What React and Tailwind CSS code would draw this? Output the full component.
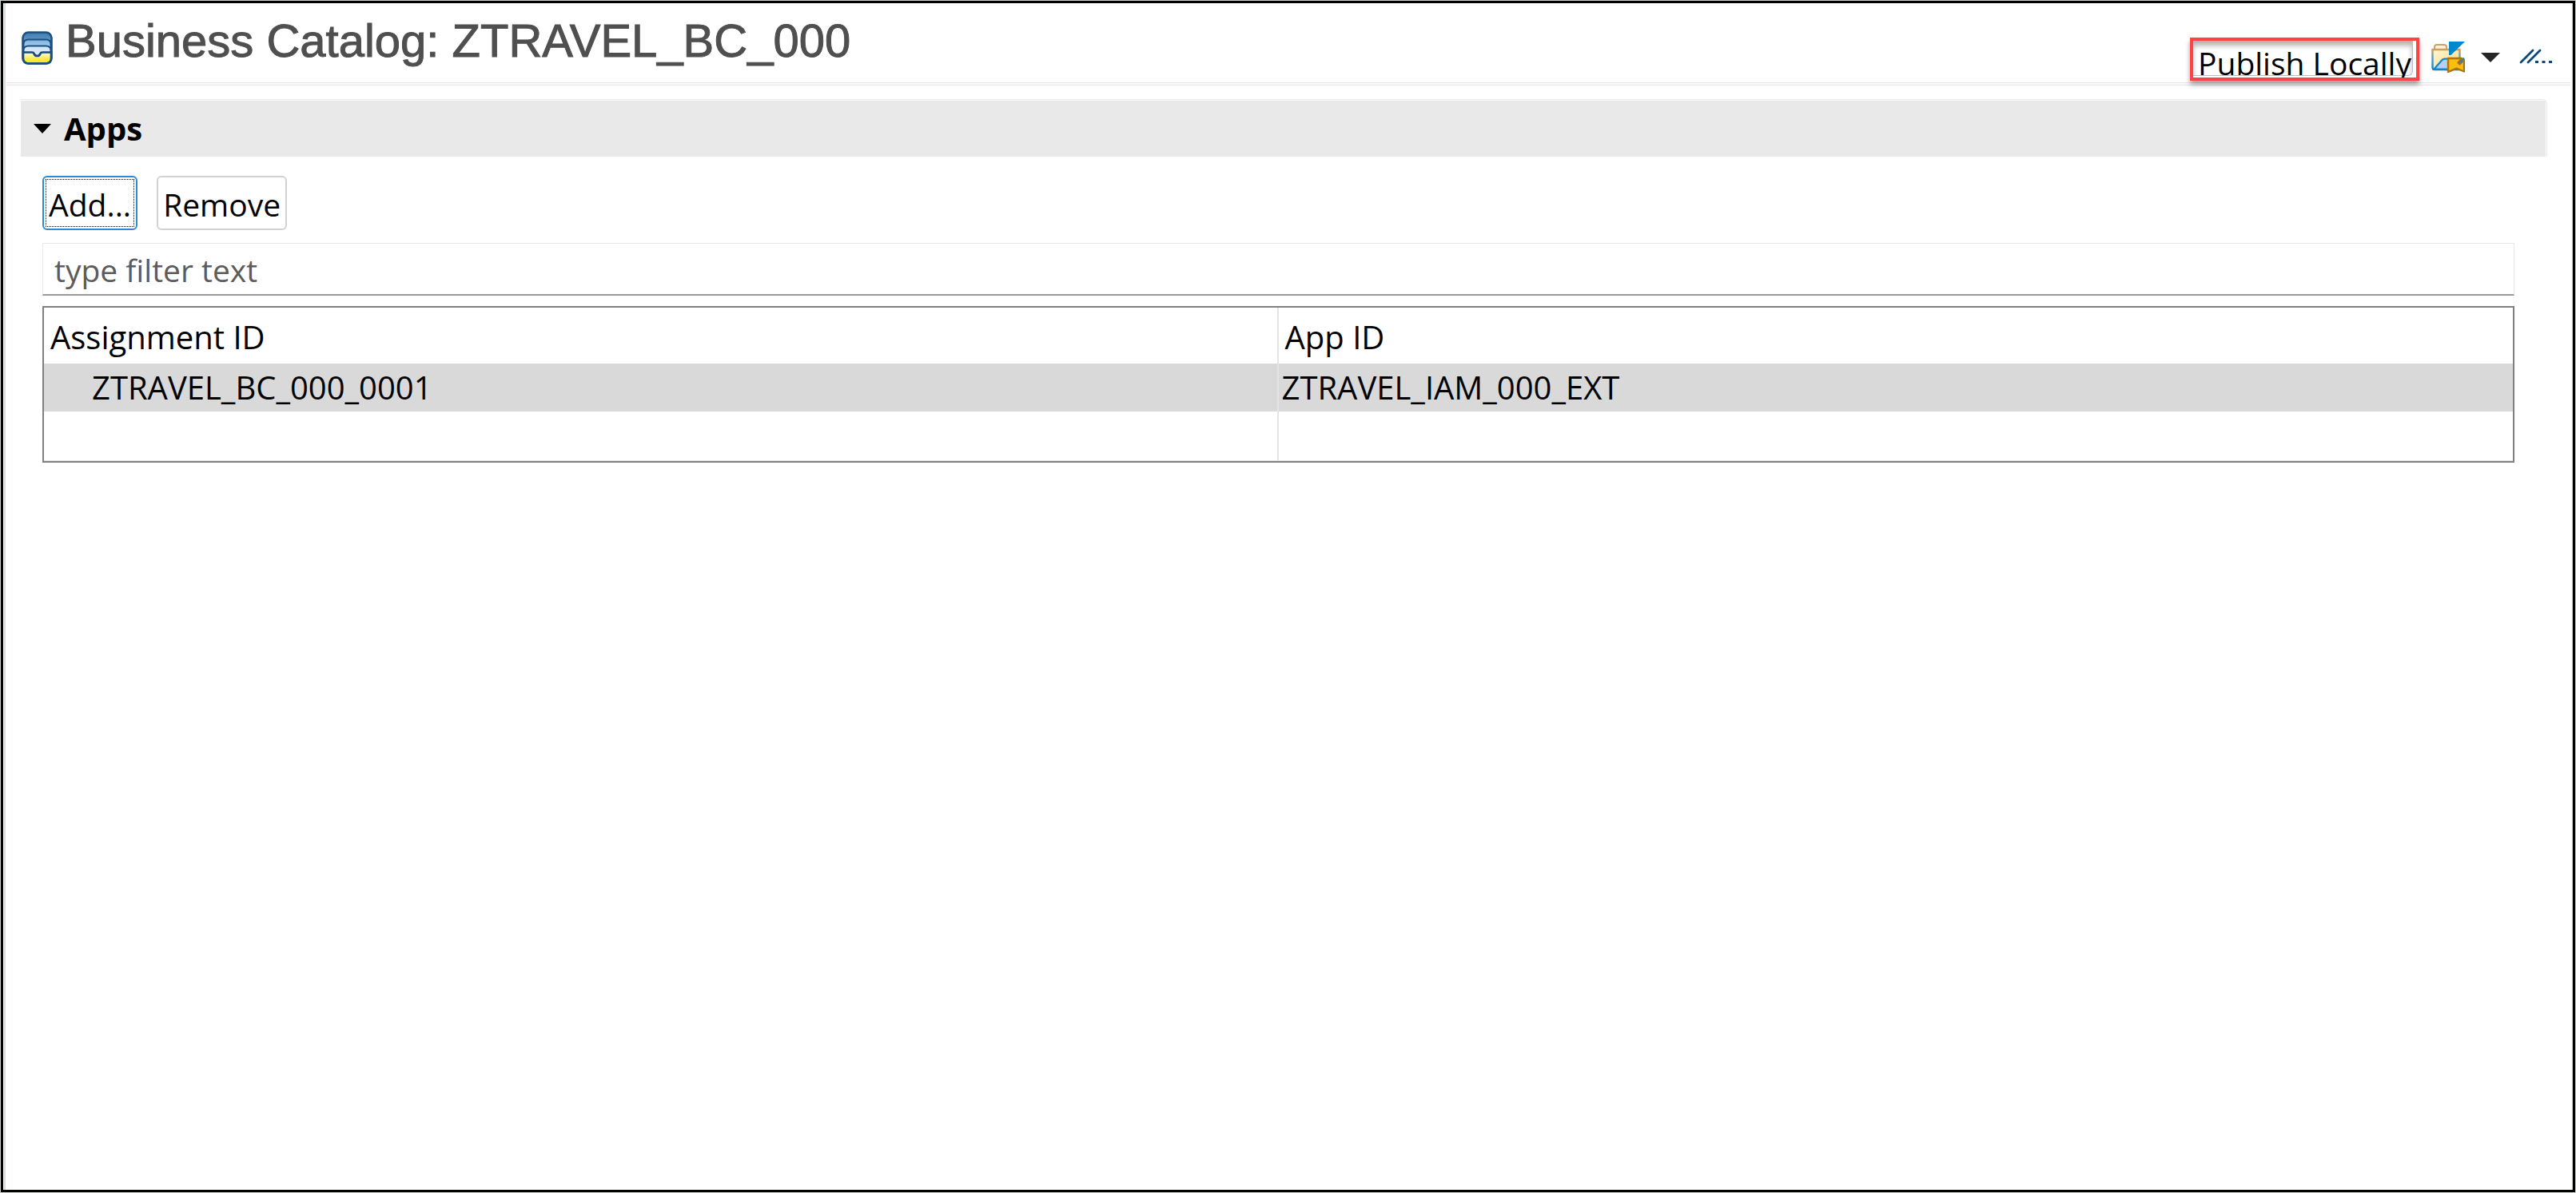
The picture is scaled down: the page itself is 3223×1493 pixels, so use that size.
const rows = [{ assignment: "ZTRAVEL_BC_000_0001", app: "ZTRAVEL_IAM_000_EXT" }];

function CatalogIcon() {
  return (
    <svg width="39" height="42" viewBox="0 0 39 42" aria-hidden="true">
      <defs>
        <linearGradient id="top" x1="0" y1="0" x2="0" y2="1">
          <stop offset="0" stopColor="#3f7cae" />
          <stop offset="0.35" stopColor="#6ba0ca" />
        </linearGradient>
        <linearGradient id="mid" x1="0" y1="0" x2="0" y2="1">
          <stop offset="0" stopColor="#7fb2de" />
          <stop offset="0.6" stopColor="#b4d6f0" />
        </linearGradient>
        <linearGradient id="tray" x1="0" y1="0" x2="0" y2="1">
          <stop offset="0" stopColor="#fffbe0" />
          <stop offset="0.6" stopColor="#fbe94e" />
          <stop offset="1" stopColor="#ffe600" />
        </linearGradient>
      </defs>
      <rect x="1.5" y="1.5" width="36" height="39" rx="7" fill="url(#top)" />
      <path d="M2.5 16q0-5.500 6-5.500h22q6 0 6 5.500v14h-34z" fill="url(#mid)" stroke="#1b4f83" strokeWidth="2" />
      <path d="M2.5 24q0-5.500 6-5.500h22q6 0 6 5.500v8h-34z" fill="#d5e7f6" stroke="#1b4f83" strokeWidth="2" />
      <path d="M2 26.500h11q2 0 2.500 1.500 1 3 4 3t4-3q.5-1.500 2.500-1.500H37V34q0 6.500-6.500 6.500h-22Q2 40.500 2 34z" fill="url(#tray)" stroke="#164a7e" strokeWidth="2.600" />
      <rect x="1.500" y="1.500" width="36" height="39" rx="7" fill="none" stroke="#1b4f83" strokeWidth="2.600" />
    </svg>
  );
}

function FolderIcon() {
  return (
    <svg width="42" height="39" viewBox="0 0 42 39" aria-hidden="true">
      <defs>
        <linearGradient id="paper" x1="0" y1="0" x2="1" y2="1">
          <stop offset="0" stopColor="#fff6cf" />
          <stop offset="1" stopColor="#fbd98a" />
        </linearGradient>
        <linearGradient id="edge" x1="0" y1="0" x2="0" y2="1">
          <stop offset="0" stopColor="#cf9f62" />
          <stop offset="0.4" stopColor="#5d9cb8" />
          <stop offset="1" stopColor="#0d83cc" />
        </linearGradient>
      </defs>
      <path d="M4 10V7q0-3 3-3h9q3 0 3 3v3" fill="#fff3da" stroke="#cda16b" strokeWidth="2" />
      <path d="M1.500 10h34v25H4q-2.500 0-2.500-2.500z" fill="url(#paper)" stroke="url(#edge)" strokeWidth="2.400" />
      <path d="M3.500 34.500Q10 27 13 23.500q1.500-1.800 4-1.800h17v13z" fill="#b5d0f8" stroke="#1286cf" strokeWidth="2.200" />
      <path d="M22 0h20L24.500 17H22z" fill="#0088cf" />
      <path d="M21 21H38L33.500 26.500 35.500 28.500 41 23V37.500L31.500 33.500 21 38z" fill="#fdbd0b" stroke="#ad7410" strokeWidth="2.400" strokeLinejoin="round" />
      <path d="M35 27L41 20.500" stroke="#2b86b0" strokeWidth="2.200" />
    </svg>
  );
}

function SlashesIcon() {
  return (
    <svg width="42" height="20" viewBox="0 0 42 20" aria-hidden="true" stroke="#0b477f" fill="#0b477f">
      <path d="M2 17L17 2M11 17L26 2" strokeWidth="2.800" strokeLinecap="round" />
      <g stroke="none">
        <rect x="20" y="15" width="4" height="3" />
        <rect x="28.500" y="15" width="4" height="3" />
        <rect x="37" y="15" width="4" height="3" />
      </g>
    </svg>
  );
}

function Triangle({ className }) {
  return (
    <svg viewBox="0 0 24 12" preserveAspectRatio="none" className={className} aria-hidden="true">
      <path d="M0 0h24L12 12z" fill="currentColor" />
    </svg>
  );
}

export default function App() {
  return (
    <div className="flex min-h-screen border border-[#ccd3cf] bg-white font-['Open_Sans','Noto_Sans',sans-serif] text-[39px] text-black">
      <div className="flex flex-1 border-[3px] border-black pl-px">
        <main className="flex-1 border-r border-l-2 border-r-[#c4c4c4] border-l-[#dcdcdc]">
          <header className="mr-0.5 flex items-end justify-between">
            <div className="flex items-end gap-4 pt-[15px] pb-5 pl-5">
              <div className="pb-0.5">
                <CatalogIcon />
              </div>
              <h1 className="font-['Liberation_Sans',sans-serif] text-[58px] leading-[64px] text-[#4f4f4f] [-webkit-text-stroke:1px_#4f4f4f]">
                Business Catalog: ZTRAVEL_BC_000
              </h1>
            </div>
            <div className="flex items-end pr-[22px] pb-0.5">
              <button
                type="button"
                className="relative flex h-[54px] items-start rounded-none border-4 border-[#ff4343] bg-white px-1 leading-[56px] shadow-[0_5px_6px_rgba(0,0,0,0.35)]"
              >
                <span className="pointer-events-none absolute inset-0 mr-1 mb-0.5 rounded-br-md border-r border-b border-[#bdbdbd] shadow-[inset_0_6px_6px_rgba(0,0,0,0.3)]" />
                <span className="relative h-[46px] overflow-hidden px-0.5">Publish Locally</span>
              </button>
              <button type="button" aria-label="Open folder" className="ml-[15px] pb-2.5">
                <FolderIcon />
              </button>
              <button type="button" aria-label="More actions" className="ml-5 pb-[23px] text-[#262626]">
                <Triangle className="h-3 w-6" />
              </button>
              <button type="button" aria-label="Show path" className="ml-6 pb-5">
                <SlashesIcon />
              </button>
            </div>
          </header>
          <div className="mr-0.5 ml-px h-1 border-y border-[#e6e6e6] bg-[#fafafa]" />

          <section>
            <div className="mt-[17px] mr-[31px] ml-[19px] rounded-tr-md border-t border-r border-[#e9e9e9] pt-px pr-px">
              <h2 className="bg-[#e9e9e9] text-[40px] leading-[70px] font-bold">
                <button type="button" aria-expanded="true" className="flex items-center gap-4 pl-4">
                  <Triangle className="h-3 w-[22px]" />
                  Apps
                </button>
              </h2>
            </div>

            <div className="mt-6 mr-[72px] ml-[46px]">
              <div className="flex gap-6">
                <button type="button" className="h-[68px] rounded-md border-2 border-[#2a8ad8] p-0.5">
                  <span className="flex h-full items-center border border-dotted border-black px-[3px] pt-1 leading-[56px]">
                    Add...
                  </span>
                </button>
                <button
                  type="button"
                  className="h-[68px] rounded-md border-2 border-[#d2d2d2] px-1.5 pt-1 leading-[60px]"
                >
                  Remove
                </button>
              </div>
              <input
                type="text"
                aria-label="Filter"
                placeholder="type filter text"
                className="mt-4 block h-[66px] w-full rounded-none border border-b-2 border-[#e8e8e8] border-b-[#999999] pt-0.5 pl-3.5 placeholder:text-[#5c5c5c]"
              />
              <div className="mt-[13px] border-2 border-[#808080]">
                <table className="w-full table-fixed border-separate border-spacing-0 text-left text-[40px]">
                  <thead>
                    <tr className="h-[70px]">
                      <th scope="col" className="border-r-2 border-[#e4e4e4] pt-1 pl-2 font-normal">
                        Assignment ID
                      </th>
                      <th scope="col" className="pt-1 pl-2 font-normal">
                        App ID
                      </th>
                    </tr>
                  </thead>
                  <tbody>
                    {rows.map((r) => (
                      <tr key={r.assignment} className="h-[60px] bg-[#d9d9d9] leading-[60px]">
                        <td className="border-r-2 border-[#e4e4e4] pl-[60px]">{r.assignment}</td>
                        <td className="pl-1">{r.app}</td>
                      </tr>
                    ))}
                    <tr className="h-[62px]">
                      <td className="border-r-2 border-b border-[#e4e4e4]" />
                      <td className="border-b border-[#e4e4e4]" />
                    </tr>
                  </tbody>
                </table>
              </div>
            </div>
          </section>
        </main>
      </div>
    </div>
  );
}
